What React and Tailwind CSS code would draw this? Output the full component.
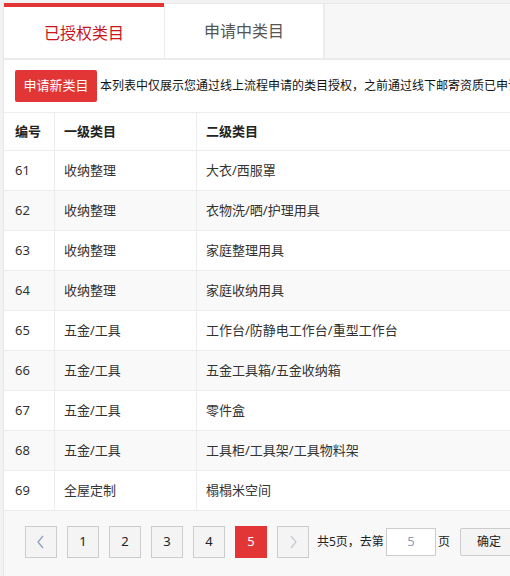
import React from "react";

const rows = [
  ["61", "收纳整理", "大衣/西服罩"],
  ["62", "收纳整理", "衣物洗/晒/护理用具"],
  ["63", "收纳整理", "家庭整理用具"],
  ["64", "收纳整理", "家庭收纳用具"],
  ["65", "五金/工具", "工作台/防静电工作台/重型工作台"],
  ["66", "五金/工具", "五金工具箱/五金收纳箱"],
  ["67", "五金/工具", "零件盒"],
  ["68", "五金/工具", "工具柜/工具架/工具物料架"],
  ["69", "全屋定制", "榻榻米空间"],
];

const font = { fontFamily: '"Noto Sans", "Noto Sans CJK SC", sans-serif' };

function PageBtn({ children, active, muted }) {
  return (
    <div
      className={
        "w-[32px] h-[32px] flex items-center justify-center text-[13px] shrink-0 " +
        (active
          ? "bg-[#e23636] text-white border border-[#e23636]"
          : "bg-[#f4f4f4] border border-[#cccccc] " + (muted ? "text-[#9aa4b8]" : "text-[#222]"))
      }
    >
      {children}
    </div>
  );
}

export default function App() {
  return (
    <div className="w-[510px] h-[576px] overflow-hidden bg-[#f2f2f2] pl-[3px] pt-[3px]" style={font}>
      <div className="w-[560px] h-full flex flex-col bg-white border-l border-[#e6e6e6]">
        {/* tabs */}
        <div className="flex h-[57px] bg-[#f7f7f7] border-b-2 border-[#ebebeb] border-t border-t-[#e8e8e8] shrink-0">
          <div className="w-[160px] bg-white border-t-[4px] border-[#e23636] -mt-px flex items-center justify-center text-[16px] text-[#c8161d]">
            已授权类目
          </div>
          <div className="w-[161px] bg-white border-l border-r-2 border-[#ececec] flex items-center justify-center text-[16px] text-[#555]">
            申请中类目
          </div>
        </div>
        {/* toolbar */}
        <div className="flex items-center h-[52px] pl-[11px] shrink-0">
          <div className="w-[82px] h-[32px] rounded-[2px] bg-[#e23636] text-white text-[13px] flex items-center justify-center shrink-0">
            申请新类目
          </div>
          <div className="ml-[3px] text-[12px] text-[#111] whitespace-nowrap">
            本列表中仅展示您通过线上流程申请的类目授权，之前通过线下邮寄资质已申请的类目不在此列表展示
          </div>
        </div>
        {/* table */}
        <div className="flex flex-col border-t border-[#ececec] shrink-0">
          <div className="flex h-[38px] items-center text-[13px] text-[#222] font-bold border-b border-[#ececec]">
            <div className="w-[51px] h-full flex items-center pl-[11px] border-r border-[#ececec]">编号</div>
            <div className="w-[142px] h-full flex items-center pl-[9px] border-r border-[#ececec]">一级类目</div>
            <div className="flex-1 h-full flex items-center pl-[9px]">二级类目</div>
          </div>
          {rows.map((r, i) => (
            <div
              key={r[0]}
              className={
                "flex h-[40px] items-center text-[13px] text-[#333] border-b border-[#ececec] " +
                (i % 2 === 1 ? "bg-[#f9f9f9]" : "bg-white")
              }
            >
              <div className="w-[51px] h-full flex items-center pl-[11px] border-r border-[#ececec]">{r[0]}</div>
              <div className="w-[142px] h-full flex items-center pl-[9px] border-r border-[#ececec]">{r[1]}</div>
              <div className="flex-1 h-full flex items-center pl-[9px]">{r[2]}</div>
            </div>
          ))}
        </div>
        {/* pagination */}
        <div className="flex-1 bg-[#f8f8f8] flex items-start pt-[15px] pl-[21px]">
          <div className="flex items-center gap-[10px]">
            <PageBtn muted>
              <svg width="10" height="14" viewBox="0 0 10 14" fill="none">
                <path d="M7 1L2 7l5 6" stroke="#8a9bbd" strokeWidth="1.2" />
              </svg>
            </PageBtn>
            <PageBtn>1</PageBtn>
            <PageBtn>2</PageBtn>
            <PageBtn>3</PageBtn>
            <PageBtn>4</PageBtn>
            <PageBtn active>5</PageBtn>
            <PageBtn muted>
              <svg width="10" height="14" viewBox="0 0 10 14" fill="none">
                <path d="M3 1l5 6-5 6" stroke="#c4c9d2" strokeWidth="1.2" />
              </svg>
            </PageBtn>
          </div>
          <div className="flex items-center h-[32px] ml-[8px] text-[12px] text-[#222]">
            <span>共5页，去第</span>
            <div className="w-[50px] h-[28px] bg-white border border-[#cccccc] ml-[2px] mr-[2px] flex items-center justify-center text-[13px] text-[#8a9bbd]">
              5
            </div>
            <span>页</span>
            <div className="ml-[10px] w-[58px] h-[28px] bg-[#f4f4f4] border border-[#cccccc] rounded-[2px] flex items-center justify-center">
              确定
            </div>
          </div>
        </div>
      </div>
    </div>
  );
}
